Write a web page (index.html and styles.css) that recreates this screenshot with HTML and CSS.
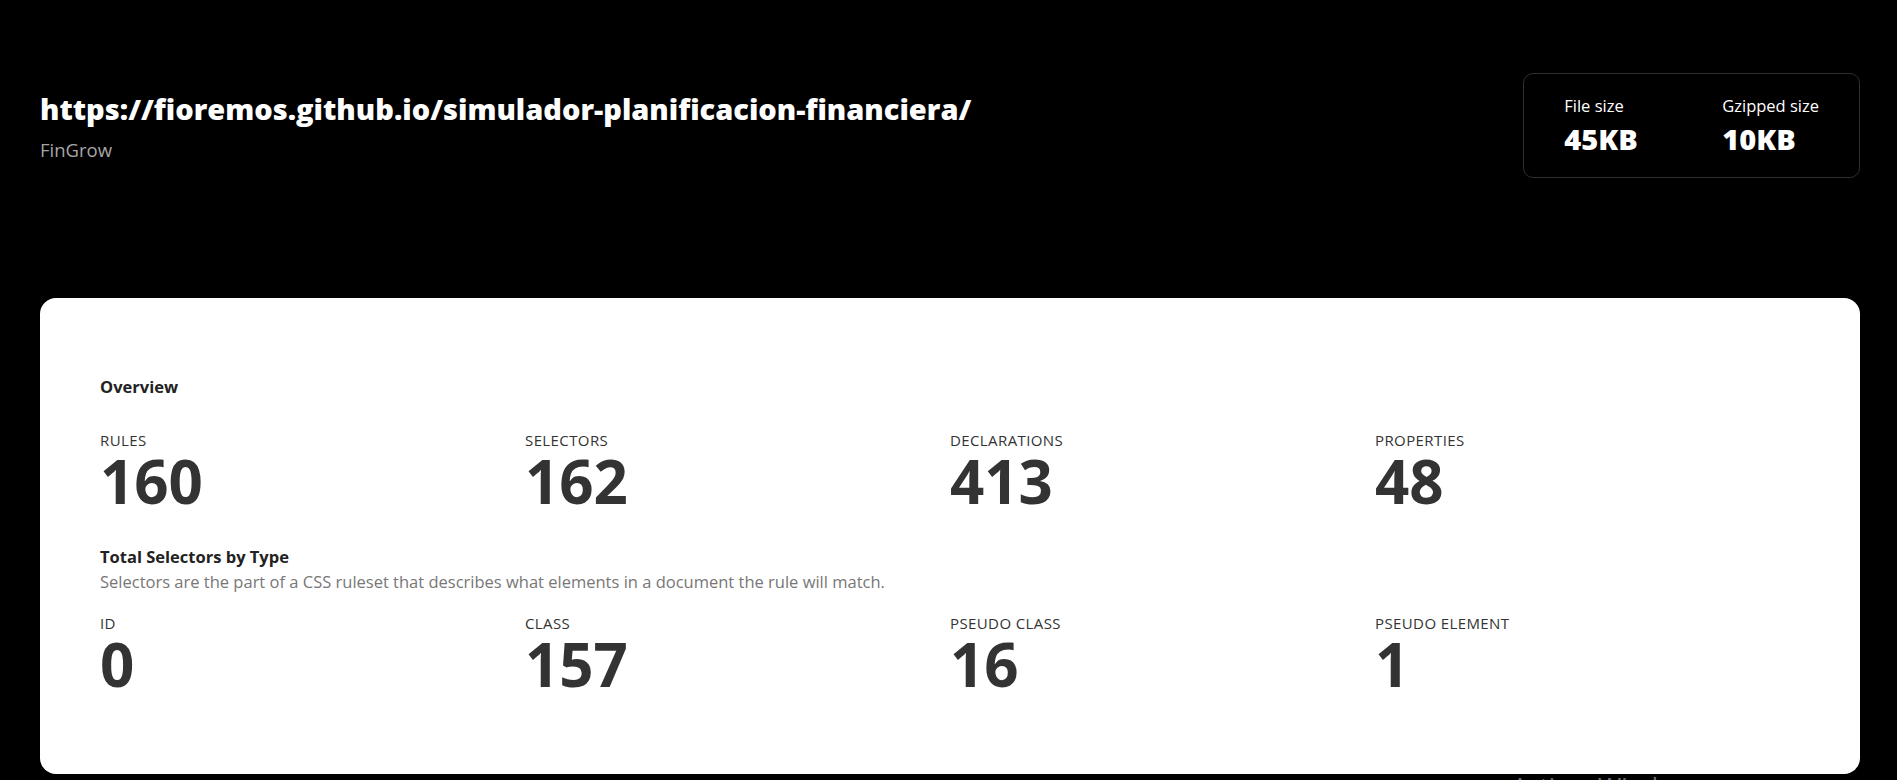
FILE: index.html
```html
<!DOCTYPE html>
<html lang="en">
<head>
<meta charset="utf-8">
<title>FinGrow – CSS stats</title>
<link rel="stylesheet" href="styles.css">
</head>
<body>
<div class="page">
  <header class="top">
    <div class="site">
      <h1 class="url">https://fioremos.github.io/simulador-planificacion-financiera/</h1>
      <p class="name">FinGrow</p>
    </div>
    <div class="sizes">
      <div class="size">
        <span class="size-label">File size</span>
        <span class="size-value">45KB</span>
      </div>
      <div class="size">
        <span class="size-label">Gzipped size</span>
        <span class="size-value">10KB</span>
      </div>
    </div>
  </header>

  <main class="card">
    <section class="group">
      <h2 class="group-title">Overview</h2>
      <div class="stats">
        <div class="stat"><span class="stat-label">RULES</span><span class="stat-value">160</span></div>
        <div class="stat"><span class="stat-label">SELECTORS</span><span class="stat-value">162</span></div>
        <div class="stat"><span class="stat-label">DECLARATIONS</span><span class="stat-value">413</span></div>
        <div class="stat"><span class="stat-label">PROPERTIES</span><span class="stat-value">48</span></div>
      </div>
    </section>
    <section class="group group-types">
      <h2 class="group-title">Total Selectors by Type</h2>
      <p class="group-desc">Selectors are the part of a CSS ruleset that describes what elements in a document the rule will match.</p>
      <div class="stats stats-types">
        <div class="stat"><span class="stat-label">ID</span><span class="stat-value">0</span></div>
        <div class="stat"><span class="stat-label">CLASS</span><span class="stat-value">157</span></div>
        <div class="stat"><span class="stat-label">PSEUDO CLASS</span><span class="stat-value">16</span></div>
        <div class="stat"><span class="stat-label">PSEUDO ELEMENT</span><span class="stat-value">1</span></div>
      </div>
    </section>
  </main>
</div>
<div class="watermark">Activar Windows</div>
</body>
</html>
```

FILE: styles.css
```css
html, body {
  margin: 0;
  padding: 0;
  background: #000;
  height: 100%;
  overflow: hidden;
}

body {
  font-family: "Open Sans", "Noto Sans", sans-serif;
  color: #fff;
  position: relative;
}

.page {
  padding: 73px 37px 0 40px;
}

.top {
  display: flex;
  justify-content: space-between;
  align-items: center;
}

.site {
  display: flex;
  flex-direction: column;
  gap: 10px;
}

.url {
  margin: 0;
  font-size: 29px;
  line-height: 38px;
  font-weight: 800;
  color: #fff;
}

.name {
  margin: 0;
  font-size: 18.5px;
  line-height: 24px;
  color: #a6a6a6;
}

.sizes {
  display: grid;
  grid-template-columns: 158px auto;
  padding: 21px 40px 20px 40px;
  border: 1px solid #2f2f2f;
  border-radius: 10px;
}

.size {
  display: flex;
  flex-direction: column;
  gap: 4px;
}

.size-label {
  font-size: 16.5px;
  line-height: 22px;
  color: #fff;
}

.size-value {
  font-size: 29px;
  line-height: 36px;
  font-weight: 800;
  color: #fff;
}

.card {
  margin-top: 120px;
  background: #fff;
  border-radius: 16px;
  padding: 77px 60px 78px 60px;
  color: #333;
}

.group-title {
  margin: 0;
  font-size: 16.5px;
  line-height: 24px;
  font-weight: 700;
  color: #222;
}

.stats {
  display: grid;
  grid-template-columns: repeat(4, 1fr);
  margin-top: 32px;
}

.stat {
  display: flex;
  flex-direction: column;
}

.stat-label {
  font-size: 15px;
  line-height: 18px;
  color: #333;
  letter-spacing: 0.4px;
}

.stat-value {
  font-size: 60px;
  line-height: 64px;
  font-weight: 700;
  color: #333;
}

.group-types {
  margin-top: 33px;
}

.group-types .group-title {
  line-height: 22px;
}

.group-desc {
  margin: 3px 0 0 0;
  font-size: 16.5px;
  line-height: 21px;
  color: #777;
}

.stats-types {
  margin-top: 22px;
}

.watermark {
  position: absolute;
  left: 1512px;
  top: 774px;
  font-size: 25px;
  line-height: 25px;
  color: rgba(255, 255, 255, 0.45);
  white-space: nowrap;
}
```
